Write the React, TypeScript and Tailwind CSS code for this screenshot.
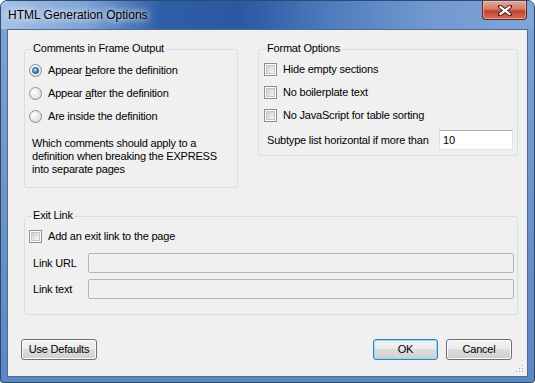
import React from "react";

const Check = () => (
  <span className="flex w-[13px] h-[13px] shrink-0 border border-[#8e8f8f] bg-white p-[1px]">
    <span className="flex-1 border border-[#c4c4c4] bg-[linear-gradient(135deg,#cfcfcf,#f6f6f6)]" />
  </span>
);

const Radio = ({ checked }: { checked?: boolean }) => (
  <span className="flex w-[13px] h-[13px] shrink-0 items-center justify-center rounded-full border border-[#8e8f8f] bg-[radial-gradient(circle_at_35%_35%,#ffffff,#d2d2d2)]">
    {checked && (
      <span className="w-[7px] h-[7px] rounded-full border border-[#1b4d80] bg-[radial-gradient(circle_at_40%_35%,#c4efff,#2c8fd8_55%,#0d4a8a)]" />
    )}
  </span>
);

const Group = ({ title, className, children }: { title: string; className?: string; children: React.ReactNode }) => (
  <div className={`relative rounded-[3px] border border-[#d5dfe5] ${className || ""}`}>
    <span className="absolute -top-[8px] left-[7px] bg-[#f0f0f0] px-[1px] leading-[13px]">{title}</span>
    {children}
  </div>
);

const Button = ({ label, primary, className }: { label: string; primary?: boolean; className?: string }) => (
  <button
    className={`h-[21px] rounded-[3px] border text-[11px] leading-[13px] text-black bg-[linear-gradient(#f2f2f2_0%,#ebebeb_50%,#dddddd_50%,#cfcfcf_100%)] ${
      primary
        ? "border-[#3c7fb1] shadow-[inset_0_0_0_1px_#8fdcf8]"
        : "border-[#707070] shadow-[inset_0_0_0_1px_#fbfbfb]"
    } ${className || ""}`}
  >
    {label}
  </button>
);

export default function App() {
  return (
    <div className="w-[535px] h-[383px] flex flex-col rounded-t-[7px] rounded-b-[3px] border border-[#2f4a70] bg-[linear-gradient(180deg,#7fa3d4_0%,#6a91c8_60%,#5d87c2_100%)] font-['Liberation_Sans',Arial,sans-serif] text-[11px] tracking-[-0.2px] text-black">
      {/* title bar */}
      <div className="h-[28px] flex items-start rounded-t-[6px] bg-[linear-gradient(90deg,#a6c2e6_0%,#7da2d6_16%,#2f5ea8_30%,#2a58a2_45%,#4f7cbd_62%,#7199d0_80%,#80a5d7_100%)]">
        <span className="ml-[7px] mt-[7px] text-[12px] leading-[15px] tracking-normal [text-shadow:0_0_6px_#ffffff,0_0_10px_rgba(255,255,255,0.8)]">
          HTML Generation Options
        </span>
        <div className="ml-auto mr-[7px] w-[45px] h-[19px] flex items-center justify-center rounded-b-[4px] border border-t-0 border-[#5c2a22] bg-[linear-gradient(#e8a898_0%,#d37a68_45%,#c2412f_55%,#d0705c_100%)] shadow-[inset_0_0_0_1px_rgba(255,210,200,0.5)]">
          <svg width="14" height="11" viewBox="0 0 14 11">
            <path d="M2 1.5 L12 9.5 M12 1.5 L2 9.5" stroke="#4a1f18" strokeWidth="4" strokeLinecap="square" />
            <path d="M2.5 2 L11.5 9 M11.5 2 L2.5 9" stroke="#ffffff" strokeWidth="2.2" strokeLinecap="square" />
          </svg>
        </div>
      </div>

      {/* client area */}
      <div className="relative mx-[6px] h-[348px] border border-[#4e6b90] bg-[#f0f0f0] flex flex-col pl-[16px] pr-[9px] pt-[19px]">
        <div className="flex gap-[20px] items-start">
          <Group title="Comments in Frame Output" className="w-[214px] h-[139px]">
            <div className="pt-[9px] pl-[4px]">
              <div className="h-[23px] flex items-center gap-[6px]">
                <Radio checked />
                <span>Appear <u>b</u>efore the definition</span>
              </div>
              <div className="h-[23px] flex items-center gap-[6px]">
                <Radio />
                <span>Appear <u>a</u>fter the definition</span>
              </div>
              <div className="h-[23px] flex items-center gap-[6px]">
                <Radio />
                <span>Are inside the definition</span>
              </div>
            </div>
            <p className="mt-[9px] pl-[7px] leading-[13px]">
              Which comments should apply to a<br />
              definition when breaking the EXPRESS<br />
              into separate pages
            </p>
          </Group>

          <Group title="Format Options" className="w-[260px] h-[107px]">
            <div className="pt-[8px] pl-[5px]">
              <div className="h-[23px] flex items-center gap-[6px]">
                <Check />
                <span>Hide empty sections</span>
              </div>
              <div className="h-[23px] flex items-center gap-[6px]">
                <Check />
                <span>No boilerplate text</span>
              </div>
              <div className="h-[23px] flex items-center gap-[6px]">
                <Check />
                <span>No JavaScript for table sorting</span>
              </div>
            </div>
            <div className="mt-[3px] flex items-center justify-between pl-[8px] pr-[4px]">
              <span>Subtype list horizontal if more than</span>
              <div className="w-[74px] h-[20px] flex items-center pl-[3px] bg-white border border-[#dde2e8] border-t-[#abadb3]">
                10
              </div>
            </div>
          </Group>
        </div>

        <Group title="Exit Link" className="mt-[28px] h-[99px]">
          <div className="pt-[8px] pl-[4px] h-[31px]">
            <div className="h-[23px] flex items-center gap-[6px]">
              <Check />
              <span>Add an exit link to the page</span>
            </div>
          </div>
          <div className="mt-[5px] flex flex-col gap-[6px] pl-[8px] pr-[3px]">
            <div className="flex items-center">
              <span className="w-[55px]">Link URL</span>
              <div className="flex-1 h-[20px] rounded-[2px] border border-[#b5b5b5] bg-[#f0f0f0]" />
            </div>
            <div className="flex items-center">
              <span className="w-[55px]">Link text</span>
              <div className="flex-1 h-[20px] rounded-[2px] border border-[#b5b5b5] bg-[#f0f0f0]" />
            </div>
          </div>
        </Group>

        <div className="mt-[24px] -ml-[3px] pr-[6px] flex items-center">
          <Button label="Use Defaults" className="w-[76px]" />
          <Button label="OK" primary className="ml-auto w-[65px]" />
          <Button label="Cancel" className="ml-[8px] w-[66px]" />
        </div>

        {/* resize grip */}
        <svg className="absolute right-[2px] bottom-[2px]" width="10" height="10" viewBox="0 0 10 10">
          {[
            [8, 2],
            [5, 5],
            [8, 5],
            [2, 8],
            [5, 8],
            [8, 8],
          ].map(([x, y], i) => (
            <g key={i}>
              <rect x={x} y={y} width="1" height="1" fill="#ffffff" />
              <rect x={x - 1} y={y - 1} width="1" height="1" fill="#a0a0a0" />
            </g>
          ))}
        </svg>
      </div>
    </div>
  );
}
